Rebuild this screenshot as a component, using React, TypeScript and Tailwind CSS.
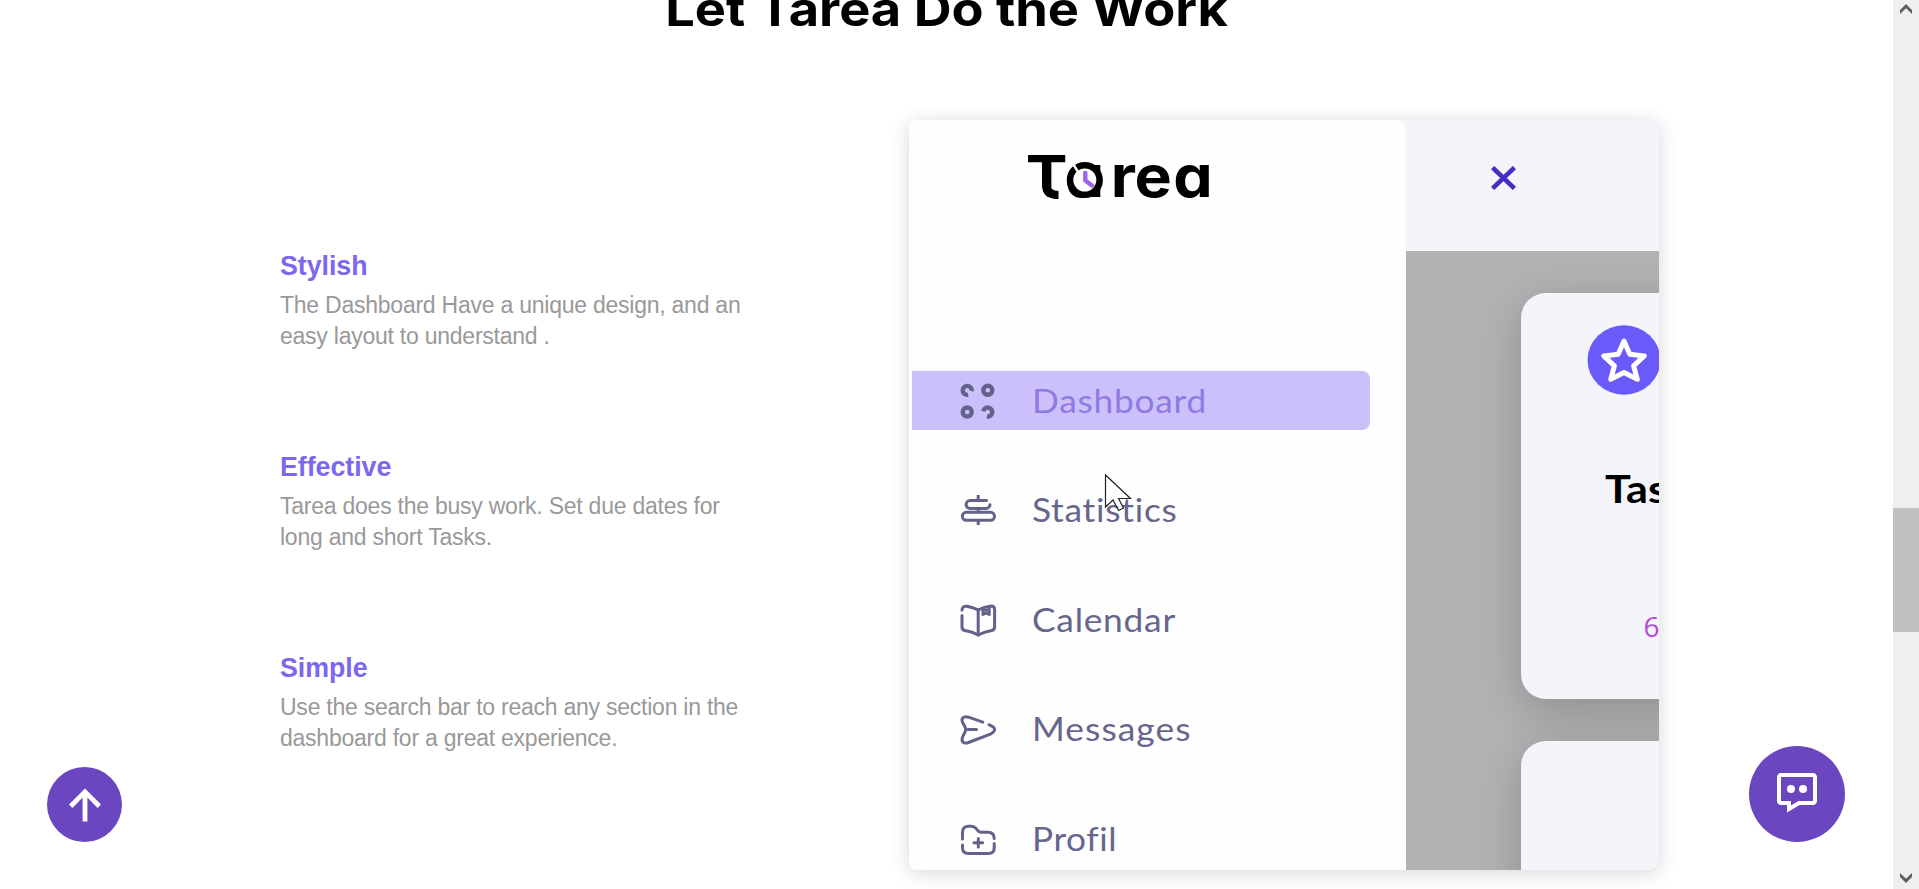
import React from "react";

const features = [
  { title: "Stylish", lines: ["The Dashboard Have a unique design, and an", "easy layout to understand ."] },
  { title: "Effective", lines: ["Tarea does the busy work. Set due dates for", "long and short Tasks."] },
  { title: "Simple", lines: ["Use the search bar to reach any section in the", "dashboard for a great experience."] },
];

function Icon({ children }: { children: React.ReactNode }) {
  return (
    <svg
      viewBox="0 0 36 36"
      className="h-9 w-9 shrink-0 overflow-visible"
      fill="none"
      stroke="#62628a"
      strokeWidth="3"
      strokeLinecap="round"
      strokeLinejoin="round"
    >
      {children}
    </svg>
  );
}

const GridIcon = () => (
  <Icon>
    <g strokeWidth="4.4" strokeLinecap="butt">
      <path d="M11.7 8.2A4.5 4.5 0 1 0 8.2 11.8" />
      <circle cx="27.8" cy="7.3" r="4.5" />
      <circle cx="7.2" cy="29" r="4.5" />
      <path d="M23.3 28.2A4.5 4.5 0 1 1 26.9 33.5" />
    </g>
  </Icon>
);

const SignIcon = () => (
  <Icon>
    <path d="M18.2 3V8M18.2 17V20M18.2 29V33" strokeLinecap="butt" />
    <path d="M26.5 8.6H10a3.8 3.8 0 0 0 0 7.8H26a4 4 0 0 0 4-3.6" />
    <rect x="2.3" y="20.3" width="32.2" height="8" rx="4" />
  </Icon>
);

const BookIcon = () => (
  <Icon>
    <path d="M2 8.2C2.2 5.2 4 3.8 7 4.2Q13 5.2 18.2 8Q24 4.5 31 3.9Q34.6 3.9 34.6 7.5V25Q34.6 28 31.6 28.5Q24 30 18.2 33Q12.5 29.8 5 28.5Q2 28 2 25V13.5" />
    <path d="M18.2 8V33" />
    <path d="M23 7.2V12.5L26 11L29.2 12.5V5.5M23 8H29" />
  </Icon>
);

const SendIcon = () => (
  <Icon>
    <path d="M22.8 11.2L8.5 6.2C3.2 4.6 0.5 7.5 3 12.2L5.2 16.3Q6.4 18.5 5.2 20.7L3 25C0.5 30.5 3.2 33.3 8.5 31.5L31 22.8Q37.5 18.9 32.5 15.5L29 13.7" />
    <path d="M8 18.5H16.5" />
  </Icon>
);

const FolderIcon = () => (
  <Icon>
    <path d="M2.5 18V11.5Q2.5 5.3 8.5 5.3H11.5Q14.3 5.3 16 7.4L18.2 10Q19.2 11.2 21 11.2H28Q34.2 11.2 34.2 17.5" />
    <path d="M34.2 22.5V27Q34.2 32.5 28.5 32.5H8.5Q2.5 32.5 2.5 27V24" />
    <path d="M18.3 17.5V26M14 21.8H22.6" />
  </Icon>
);

const items = [
  { label: "Dashboard", icon: <GridIcon />, row: "bg-[#cbc0fb]", text: "text-[#8f7be0] tracking-[0.7px]" },
  { label: "Statistics", icon: <SignIcon />, row: "", text: "text-[#66668c] tracking-[0.7px]" },
  { label: "Calendar", icon: <BookIcon />, row: "", text: "text-[#66668c] tracking-[0.7px]" },
  { label: "Messages", icon: <SendIcon />, row: "", text: "text-[#66668c] tracking-[1px]" },
  { label: "Profil", icon: <FolderIcon />, row: "", text: "text-[#66668c] tracking-[0.5px]" },
];

function Logo() {
  return (
    <svg viewBox="0 0 200 64" className="h-16 w-[200px] overflow-visible">
      <text
        x="4.3 40.6 83.2 105.2 141"
        y="52.4"
        fontSize="58"
        transform="scale(1.08 1)"
        className="font-['Inter',sans-serif] font-bold [font-feature-settings:'cv11']"
      >
        Tarea
      </text>
      <path d="M19 42H21.2Q22 53 36 55H19Z" fill="#fff" />
      <path d="M25.5 36V41Q25.8 50 37.5 50" fill="none" stroke="#000" strokeWidth="8" />
      <circle cx="63.8" cy="35" r="14.8" fill="#fff" stroke="#000" strokeWidth="6.6" />
      <path d="M51.5 18L58 28.5" stroke="#fff" strokeWidth="2.4" />
      <path d="M64.3 28V35.5L71 40.5" fill="none" stroke="#9a63f2" strokeWidth="4.4" strokeLinecap="round" strokeLinejoin="round" />
    </svg>
  );
}

function Preview() {
  return (
    <div className="relative flex h-[750px] w-[750px] overflow-hidden rounded-lg bg-[#f5f4fb]">
      <div className="flex w-[497px] flex-col rounded-tr-[10px] bg-[#fefefe]">
        <div className="flex h-[251px] pt-[25px] pl-[112px]">
          <Logo />
        </div>
        <div className="flex flex-col gap-[50.5px] pl-[3px]">
          {items.map((item) => (
            <div key={item.label} className={`flex h-[59px] w-[458px] shrink-0 items-center gap-[36px] rounded-r-lg pl-[47.5px] ${item.row}`}>
              {item.icon}
              <span className={`origin-left scale-x-[1.07] pb-[2px] font-['Lato',sans-serif] text-[33px] leading-[40px] ${item.text}`}>
                {item.label}
              </span>
            </div>
          ))}
        </div>
      </div>
      <div className="flex w-[253px] flex-col">
        <div className="flex h-[130.5px] shrink-0 pt-[46px] pl-[85px]">
          <svg viewBox="0 0 25 24" className="h-6 w-[25px]" stroke="#4a2cc4" strokeWidth="4.6">
            <path d="M1.6 1.6L23.4 22.4M23.4 1.6L1.6 22.4" />
          </svg>
        </div>
        <div className="flex grow flex-col gap-[42px] overflow-hidden bg-[#b2b2b2] pt-[42px] pl-[115px]">
          <div className="flex h-[406px] w-[400px] shrink-0 flex-col rounded-[25px] bg-[#f4f5fa] shadow-[0_12px_46px_rgba(0,0,0,0.2)]">
            <svg viewBox="0 0 74 70" className="mt-8 ml-[66px] h-[70px] w-[74px] shrink-0">
              <ellipse cx="37" cy="35" rx="36.5" ry="34.7" fill="#6a5af9" />
              <path
                d="M37 16L42.8 29.2L57.3 30.9L46.6 40.8L50.3 54.3L37 47.6L23.7 54.3L27.4 40.8L16.7 30.9L31.2 29.2Z"
                fill="none"
                stroke="#fff"
                strokeWidth="5"
                strokeLinejoin="round"
              />
            </svg>
            <span className="mt-[70px] ml-[84px] origin-left scale-x-[1.12] font-['Lato',sans-serif] text-[38.5px] leading-[46px] font-bold text-black">
              Task
            </span>
            <span className="mt-[98.5px] ml-[122.5px] font-['Open_Sans',sans-serif] text-[28px] leading-[34px] text-[#b44bd6]">6</span>
          </div>
          <div className="h-[406px] w-[400px] shrink-0 rounded-[25px] bg-[#f4f5fa] shadow-[0_12px_46px_rgba(0,0,0,0.2)]" />
        </div>
      </div>
      <svg viewBox="0 0 28 40" className="absolute top-[353px] left-[195px] h-10 w-7">
        <path d="M1.5 2V34L9 27L14.5 37.5L19.5 35L14.5 25.5H26.5Z" fill="#fff" fillOpacity="0.35" stroke="#222" strokeWidth="1.2" />
      </svg>
    </div>
  );
}

export default function App() {
  return (
    <div className="flex h-[889px] w-full overflow-hidden bg-white">
      <main className="relative h-full grow">
        <div className="flex h-[120px] justify-center">
          <h2 className="-mt-[20px] h-[58px] scale-x-[1.114] font-['Inter',sans-serif] text-[47px] leading-[58px] font-bold whitespace-nowrap text-black">
            Let Tarea Do the Work
          </h2>
        </div>
        <div className="flex">
          <div className="flex w-[909px] flex-col pt-[128px] pl-[280px]">
            {features.map((f) => (
              <section key={f.title} className="flex h-[201px] flex-col font-['Liberation_Sans',Arial,sans-serif]">
                <h3 className="mb-[6px] text-[26.8px] leading-[36px] font-bold tracking-[-0.05px] text-[#7b68ee]">{f.title}</h3>
                <p className="text-[23px] leading-[31.36px] tracking-[-0.24px] text-[#999]">
                  {f.lines[0]}
                  <br />
                  {f.lines[1]}
                </p>
              </section>
            ))}
          </div>
          <div className="rounded-lg shadow-[0_3px_20px_rgba(0,0,0,0.16)]">
            <Preview />
          </div>
        </div>
        <button className="absolute bottom-[47px] left-[47px] flex h-[75px] w-[75px] items-center justify-center rounded-full bg-[#6b46c1]">
          <svg viewBox="0 0 24 24" className="h-12 w-12" fill="#fff">
            <path d="M13.2 20.2h-2.4V8.2L5.7 13.5 4 11.8 12 3.8l8 8-1.7 1.7L13.2 8.2z" />
          </svg>
        </button>
        <button className="absolute right-12 bottom-[47px] flex h-24 w-24 items-center justify-center rounded-full bg-[#6b46c1] pb-[2px]">
          <svg viewBox="0 0 24 24" className="h-12 w-12" fill="#fff">
            <path d="M20 2H4c-1.103 0-2 .897-2 2v12c0 1.103.897 2 2 2h3v3.767L13.277 18H20c1.103 0 2-.897 2-2V4c0-1.103-.897-2-2-2zm0 14h-7.277L9 18.233V16H4V4h16v12z" />
            <circle cx="9" cy="10" r="2" />
            <circle cx="15" cy="10" r="2" />
          </svg>
        </button>
      </main>
      <aside className="flex h-full w-[26px] shrink-0 flex-col items-center bg-[#efefef]">
        <svg viewBox="0 0 12 10" className="mt-1 h-[10px] w-3" fill="#606060">
          <path d="M6 0L12 6V10L6 4.2L0 10V6Z" />
        </svg>
        <div className="mt-[494px] h-[124px] w-full bg-[#c1c1c1]" />
        <svg viewBox="0 0 12 10" className="mt-auto mb-[6px] h-[10px] w-3" fill="#606060">
          <path d="M6 10L12 4V0L6 5.8L0 0V4Z" />
        </svg>
      </aside>
    </div>
  );
}
